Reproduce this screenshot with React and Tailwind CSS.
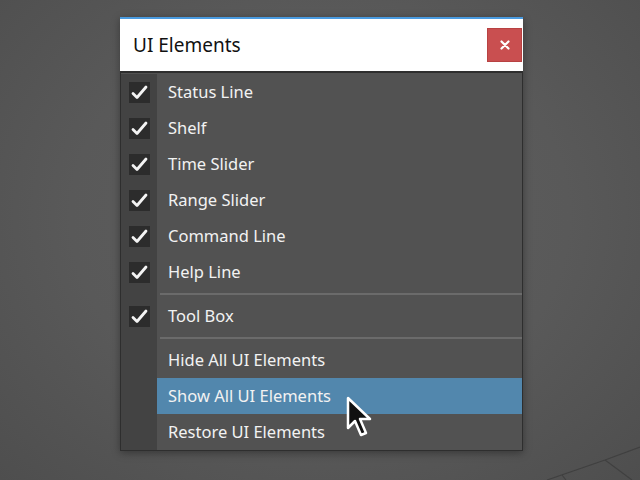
import React from "react";

const toggles = ["Status Line", "Shelf", "Time Slider", "Range Slider", "Command Line", "Help Line"];
const actions = ["Hide All UI Elements", "Show All UI Elements", "Restore UI Elements"];

const font = { fontFamily: '"Noto Sans", "Open Sans", sans-serif' };

function Check() {
  return (
    <div className="w-[21px] h-[21px] bg-[#2c2c2c] flex items-center justify-center">
      <svg width="17" height="15" viewBox="0 0 17 15">
        <path d="M2 8.5 L6 12.5 L15 2" fill="none" stroke="#f4f4f4" strokeWidth="2.8" strokeLinecap="round" strokeLinejoin="round" />
      </svg>
    </div>
  );
}

function Row({ label, checked, active }) {
  return (
    <div className="flex h-[36px]">
      <div className="w-[36px] shrink-0 flex items-center justify-center bg-[#434343]">
        {checked && <Check />}
      </div>
      <div
        className={`flex-1 flex items-center pl-[11px] pt-[1px] text-[16.5px] text-[#f2f2f2] ${active ? "bg-[#5287ad]" : ""}`}
      >
        {label}
      </div>
    </div>
  );
}

function Separator() {
  return (
    <div className="flex h-[8px]">
      <div className="w-[36px] shrink-0 bg-[#434343]" />
      <div className="flex-1 flex items-center pl-[3px]">
        <div className="h-[2px] w-full bg-[#6b6b6b]" />
      </div>
    </div>
  );
}

function Cursor() {
  return (
    <svg className="absolute left-[345px] top-[395px]" width="30" height="46" viewBox="0 0 30 46">
      <path
        d="M3 3 L3 33 L10 26 L16 40 L21 38 L15 24 L25 24 Z"
        fill="#111"
        stroke="#fff"
        strokeWidth="2.5"
        strokeLinejoin="round"
      />
    </svg>
  );
}

export default function App() {
  return (
    <div
      className="relative w-[640px] h-[480px] overflow-hidden bg-[radial-gradient(ellipse_at_50%_45%,#5f5f5f_0%,#595959_55%,#4e4e4e_100%)] pt-[17px] pl-[120px]"
      style={font}
    >
      {/* viewport grid lines */}
      <svg className="absolute left-0 top-0" width="640" height="480">
        <g stroke="#404040" strokeWidth="1.2" fill="none">
          <path d="M547 480 L605 460 L640 447" />
          <path d="M605 460 L632 480" />
          <path d="M562 475 L566 480" />
        </g>
      </svg>

      <div className="relative w-[403px] shadow-[0_2px_8px_rgba(0,0,0,0.35)]">
        <div className="h-[54px] bg-white border-t-2 border-[#4a9be0] flex items-center justify-between pl-[13px] pr-[1px]">
          <span className="text-[19px] text-[#111]">UI Elements</span>
          <div className="w-[35px] h-[34px] bg-[#c94f50] border border-[#b84242] flex items-center justify-center">
            <svg width="10" height="10" viewBox="0 0 10 10">
              <path d="M1.5 1.5 L8.5 8.5 M8.5 1.5 L1.5 8.5" stroke="#fff" strokeWidth="2.2" strokeLinecap="round" />
            </svg>
          </div>
        </div>
        <div className="bg-[#525252] border border-t-2 border-[#2e2e2e] pt-[1px]">
          {toggles.map((t) => (
            <Row key={t} label={t} checked />
          ))}
          <Separator />
          <Row label="Tool Box" checked />
          <Separator />
          {actions.map((a, i) => (
            <Row key={a} label={a} active={i === 1} />
          ))}
        </div>
      </div>

      <Cursor />
    </div>
  );
}
